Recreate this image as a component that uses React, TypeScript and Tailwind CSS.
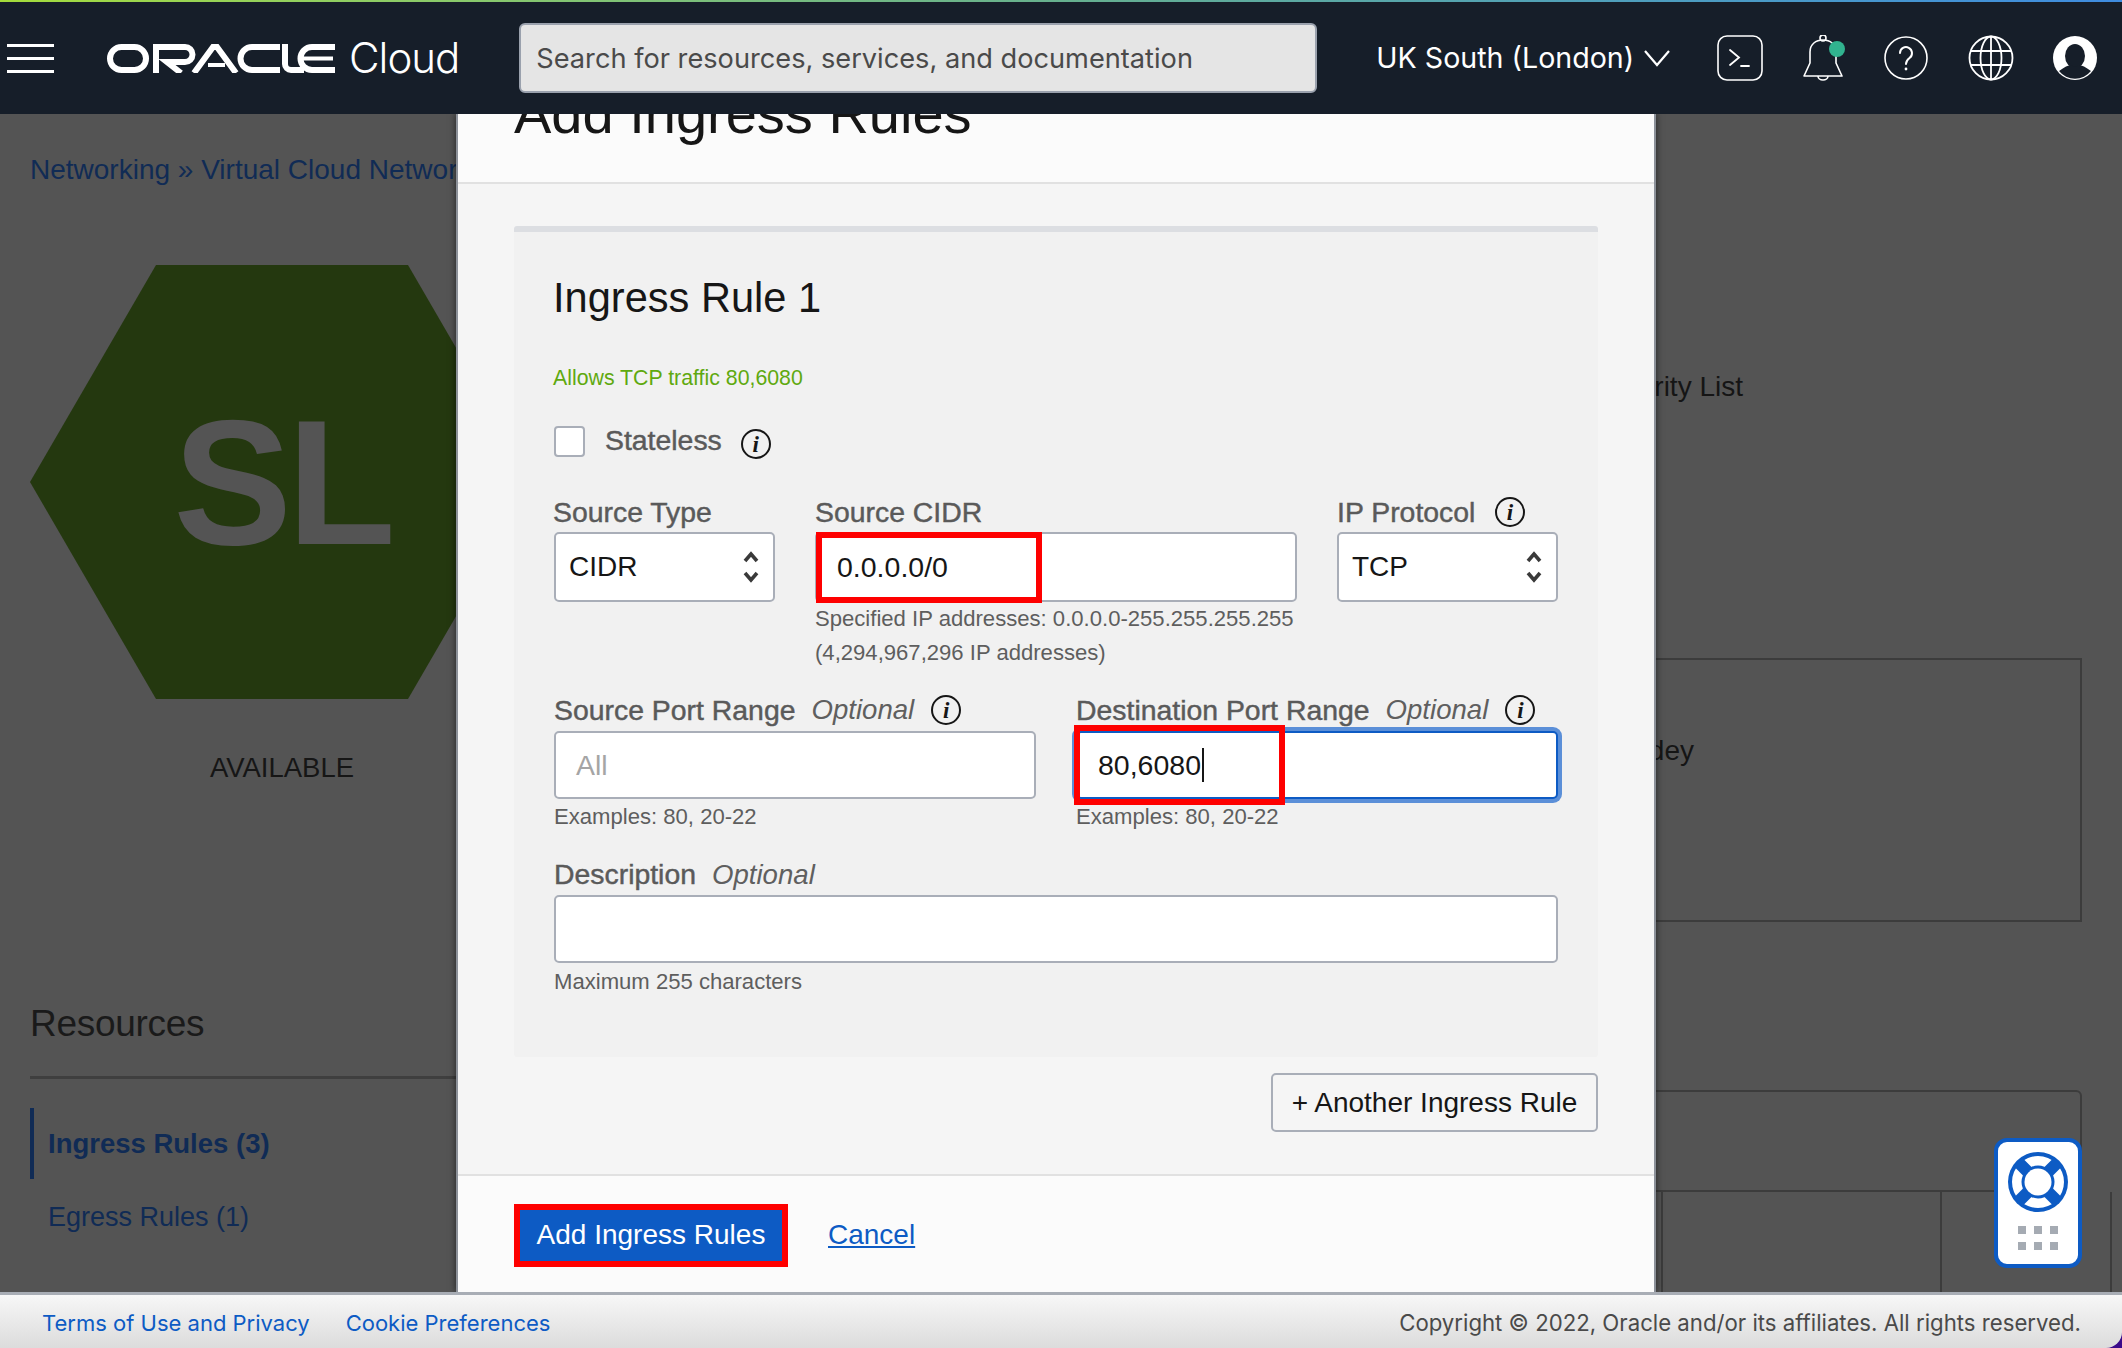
import type { ReactNode } from "react";

const sans = "font-['Liberation_Sans',Arial,sans-serif]";
const ui = "font-['Inter','Noto_Sans',sans-serif]";
const labelCls = "text-[28.4px] leading-[30px] text-[#5a5a5a] [-webkit-text-stroke:0.45px_#5a5a5a] whitespace-nowrap";
const optionalCls = "ml-[16px] text-[27.6px] italic text-[#5f5f5f] [-webkit-text-stroke:0]";
const fieldCls = "flex items-center rounded-[5px] border-2 border-[#a9aeb8] bg-white text-[28.5px] text-[#161616]";
const helpCls = "whitespace-nowrap text-[22.1px] text-[#5e5e5e]";

function OracleLogo() {
  return (
    <svg width="228" height="29" viewBox="0 0 228 29" fill="none" stroke="white" strokeWidth="6" role="img" aria-label="ORACLE">
      <rect x="3" y="3" width="36" height="23" rx="11.5" />
      <path d="M49 29V3H78a7.5 7.5 0 0 1 0 15H60L74 29" />
      <path d="M87 29L106 3H110L129 29" />
      <path d="M101 21H118" strokeWidth="4" />
      <path d="M173 3H145a11.5 11.5 0 0 0 0 23H173" />
      <path d="M178 0V20a6 6 0 0 0 6 6H197" />
      <path d="M228 3H205a11.5 11.5 0 0 0 0 23H228" />
      <path d="M196 14.5H226" strokeWidth="4" />
    </svg>
  );
}

function HeaderIcons() {
  return (
    <div className="ml-[46px] flex items-center gap-[39.5px]">
      <svg width="46" height="46" viewBox="0 0 46 46" fill="none" stroke="white" strokeWidth="1.6" strokeLinecap="round">
        <rect x="1" y="1" width="44" height="44" rx="9" />
        <path d="M13 15L22 22.5L13 30M24 31H32" strokeWidth="1.8" />
      </svg>
      <svg width="42" height="46" viewBox="0 0 42 46" fill="none" stroke="white" strokeWidth="1.6">
        <path d="M1 41L7 28V17C7 9 13 5 20 5S33 9 33 17V28L39 41Z" strokeLinejoin="round" />
        <circle cx="20" cy="3" r="3" />
        <path d="M15 41a5 4 0 0 0 10 0" />
        <circle cx="34" cy="14" r="8" fill="#31b38f" stroke="none" />
      </svg>
      <svg width="44" height="44" viewBox="0 0 44 44" fill="none" stroke="white" strokeWidth="1.6" strokeLinecap="round">
        <circle cx="22" cy="22" r="21" />
        <path d="M16 17a6 6 0 1 1 9.5 5C23 24 22 25 22 28" strokeWidth="2" />
        <circle cx="22" cy="33" r="1.4" fill="white" stroke="none" />
      </svg>
      <svg width="46" height="46" viewBox="0 0 46 46" fill="none" stroke="white" strokeWidth="1.8">
        <circle cx="23" cy="23" r="21.5" />
        <ellipse cx="23" cy="23" rx="10.5" ry="21.5" />
        <path d="M3 16H43M3 30H43M23 1.5V44.5" />
      </svg>
      <svg width="44" height="44" viewBox="0 0 44 44">
        <circle cx="22" cy="22" r="22" fill="white" />
        <ellipse cx="22" cy="20" rx="10" ry="12" fill="#161e29" />
        <path d="M6 35Q14 29 18 29Q22 33 26 29Q30 29 38 35A20.5 20.5 0 0 1 6 35Z" fill="#161e29" />
      </svg>
    </div>
  );
}

function Info({ className }: { className?: string }) {
  return (
    <span className={`flex h-[30px] w-[30px] shrink-0 items-center justify-center rounded-full border-2 border-[#161616] font-['Liberation_Serif',serif] text-[23px] font-bold italic leading-none text-[#161616] [-webkit-text-stroke:0] ${className ?? ""}`}>
      i
    </span>
  );
}

function Chevrons() {
  return (
    <svg width="18" height="34" viewBox="0 0 18 34" fill="none" stroke="#3a3a3a" strokeWidth="3.6">
      <path d="M3 11L9 4L15 11M3 23L9 30L15 23" />
    </svg>
  );
}

function Select({ value }: { value: string }) {
  return (
    <div className={`${fieldCls} h-[70px] justify-between !text-[28px] pl-[13px] pr-[13px]`}>
      {value}
      <Chevrons />
    </div>
  );
}

function Marked({ className, children }: { className: string; children?: ReactNode }) {
  return <div className={`pointer-events-none absolute border-[6px] border-[#fe0000] ${className}`}>{children}</div>;
}

function Page() {
  return (
    <main className={`relative flex min-h-0 flex-1 justify-between overflow-hidden bg-[#545454] ${sans}`}>
      <div className="flex w-[620px] flex-col pl-[30px] text-[28px]">
        <div className="mt-[38px] leading-[36px] text-[#102b55]">Networking » Virtual Cloud Networks</div>
        <div className="relative mt-[77px] flex h-[434px] w-[504px] items-center justify-center">
          <svg className="absolute inset-0" width="504" height="434" viewBox="0 0 504 434">
            <polygon points="126,0 378,0 504,217 378,434 126,434 0,217" fill="#24380f" />
          </svg>
          <span className="relative text-[178px] font-bold tracking-[-5px] text-[#545454]">SL</span>
        </div>
        <div className="mt-[52px] w-[504px] text-center text-[27.5px] leading-[34px] text-[#161616]">AVAILABLE</div>
        <div className="mt-[217px] text-[37px] leading-[44px] tracking-[-0.3px] text-[#1a1a1a]">Resources</div>
        <div className="mt-[30px] h-[3px] bg-[#3f3f3f]" />
        <div className="mt-[29px] flex h-[71px] items-center border-l-4 border-[#102b55] pl-[14px] text-[27.5px] font-bold text-[#102b55]">Ingress Rules (3)</div>
        <div className="mt-[20px] pl-[18px] text-[27px] leading-[36px] text-[#102b55]">Egress Rules (1)</div>
      </div>

      <div className="flex w-[700px] flex-col items-end pr-[10px] text-[28px] text-[#151515]">
        <div className="mr-[369px] mt-[255px] w-[333px] text-right leading-[36px]">Security List</div>
        <div className="mr-[30px] mt-[253px] flex h-[265px] w-[690px] items-center justify-start border-2 border-[#3c3c3c] pl-[10px]">
          <span className="-mt-[78px] ml-[2px]">Naveen Reddy Pandey</span>
        </div>
        <div className="mr-[30px] mt-[168px] h-[103px] w-[690px] rounded-tr-[6px] border-2 border-[#3c3c3c]" />
        <div className="flex h-[100px] w-[451px]">
          <div className="w-[279px] border-l-2 border-[#3c3c3c]" />
          <div className="w-[170px] border-l-2 border-[#3c3c3c]" />
          <div className="w-[2px] bg-[#3c3c3c]" />
        </div>
      </div>

      <section className="absolute inset-y-0 left-[456px] flex w-[1200px] flex-col border-x-2 border-[#8c9199] bg-[#f5f5f5] shadow-[0_0_7px_rgba(0,0,0,0.6)]">
        <div className="h-[70px] shrink-0 overflow-hidden border-b-2 border-[#e1e1e1] bg-[#fbfbfb] pl-[56px]">
          <h1 className="-mt-[28px] text-[56px] leading-[55px] text-[#161616]">Add Ingress Rules</h1>
        </div>

        <div className="min-h-0 flex-1 px-[56px] pt-[42px]">
          <div className="rounded-[3px] border-t-[6px] border-[#dcdee2] bg-[#f1f1f1] pb-[56px] pl-[40px] pr-[40px] pt-[42px]">
            <h2 className="-ml-[1px] text-[41.6px] leading-[48px] text-[#161616]">Ingress Rule 1</h2>
            <p className="-ml-[1px] mt-[42px] text-[21.3px] leading-[28px] text-[#5fa90f]">Allows TCP traffic 80,6080</p>
            <div className="mt-[34px] flex h-[31px] items-center">
              <span className="h-[31px] w-[31px] rounded-[4px] border-2 border-[#a9aeb8] bg-white" />
              <span className={`-mt-[4px] ml-[20px] ${labelCls}`}>Stateless</span>
              <Info className="ml-[19px] mt-[5px]" />
            </div>

            <div className="mt-[40px] grid grid-cols-[221px_1fr_221px] gap-x-[40px]">
              <div>
                <div className={`-ml-[1px] pb-[5px] ${labelCls}`}>Source Type</div>
                <Select value="CIDR" />
              </div>
              <div>
                <div className={`pb-[5px] ${labelCls}`}>Source CIDR</div>
                <div className="relative">
                  <div className={`${fieldCls} h-[70px] pl-[20px]`}>0.0.0.0/0</div>
                  <Marked className="left-[1px] top-0 h-[71px] w-[226px]" />
                </div>
                <div className={`${helpCls} leading-[34px]`}>
                  Specified IP addresses: 0.0.0.0-255.255.255.255
                  <br />
                  (4,294,967,296 IP addresses)
                </div>
              </div>
              <div>
                <div className={`flex h-[35px] items-start justify-between pr-[33px] ${labelCls}`}>
                  IP Protocol
                  <Info />
                </div>
                <Select value="TCP" />
              </div>
            </div>

            <div className="mt-[25px] grid grid-cols-2 gap-x-[40px]">
              <div>
                <div className={`flex h-[36px] items-start ${labelCls}`}>
                  Source Port Range
                  <span className={optionalCls}>Optional</span>
                  <Info className="ml-[17px]" />
                </div>
                <div className={`${fieldCls} h-[68px] pl-[20px] !text-[#a5a5a5]`}>All</div>
                <div className={`${helpCls} leading-[36px]`}>Examples: 80, 20-22</div>
              </div>
              <div>
                <div className={`flex h-[36px] items-start ${labelCls}`}>
                  Destination Port Range
                  <span className={optionalCls}>Optional</span>
                  <Info className="ml-[17px]" />
                </div>
                <div className="relative">
                  <div className={`${fieldCls} h-[68px] !border-[#0d5bc4] pl-[20px] shadow-[0_0_0_4px_#5b8fd8]`}>
                    80,6080
                    <span className="ml-[1px] h-[34px] w-[2px] bg-[#161616]" />
                  </div>
                  <Marked className="-left-[2px] -top-[6px] h-[80px] w-[211px]" />
                </div>
                <div className={`${helpCls} leading-[36px]`}>Examples: 80, 20-22</div>
              </div>
            </div>

            <div className="mt-[24px]">
              <div className={`h-[36px] ${labelCls}`}>
                Description
                <span className={optionalCls}>Optional</span>
              </div>
              <div className={`${fieldCls} h-[68px]`} />
              <div className={`${helpCls} leading-[38px]`}>Maximum 255 characters</div>
            </div>
          </div>

          <div className="mt-[16px] flex justify-end">
            <button className="h-[59px] w-[327px] rounded-[5px] border-2 border-[#a9aeb8] text-[28px] text-[#161616]">+ Another Ingress Rule</button>
          </div>
        </div>

        <div className="flex h-[118px] shrink-0 items-center border-t-2 border-[#e1e1e1] bg-[#fbfbfb] pl-[56px] pt-[2px]">
          <button className="flex h-[63px] w-[274px] items-center justify-center border-[6px] border-[#fe0000] bg-[#0d5bc4] text-[28px] text-white">Add Ingress Rules</button>
          <a className="ml-[40px] text-[28px] text-[#0d5bc4] underline">Cancel</a>
        </div>
      </section>

      <div className="absolute left-[1994px] top-[1024px] flex h-[130px] w-[88px] flex-col items-center rounded-[13px] border-4 border-[#0d5bc4] bg-white pt-[10px]">
        <svg width="60" height="60" viewBox="0 0 60 60" fill="none">
          <circle cx="30" cy="30" r="30" fill="#0d5bc4" />
          <circle cx="30" cy="30" r="26" fill="white" />
          <path d="M10 10L50 50M50 10L10 50" stroke="#0d5bc4" strokeWidth="12" />
          <circle cx="30" cy="30" r="16.5" fill="#0d5bc4" />
          <circle cx="30" cy="30" r="13.5" fill="white" />
        </svg>
        <div className="mt-[14px] grid grid-cols-[8px_8px_8px] gap-x-[8px] gap-y-[8px]">
          {[0, 1, 2, 3, 4, 5].map((n) => (
            <span key={n} className="h-[8px] w-[8px] bg-[#a5abb3]" />
          ))}
        </div>
      </div>
    </main>
  );
}

export default function App() {
  return (
    <div className={`flex h-[1348px] w-[2122px] flex-col overflow-hidden bg-[#3a0a8a] ${ui}`}>
      <div className="h-[2px] shrink-0 bg-gradient-to-r from-[#a4dc3a] via-[#66b08e] to-[#3f8ce0]" />
      <header className="flex h-[112px] shrink-0 items-center bg-[#161e29]">
        <div className="ml-[7px] flex w-[47px] flex-col gap-[10px]">
          <span className="h-[3px] bg-white" />
          <span className="h-[3px] bg-white" />
          <span className="h-[3px] bg-white" />
        </div>
        <div className="ml-[53px]">
          <OracleLogo />
        </div>
        <span className="ml-[14px] text-[42px] font-light leading-none tracking-[-1px] text-white">Cloud</span>
        <div className="ml-[60px] flex h-[70px] w-[798px] items-center rounded-[6px] border-2 border-[#9aa1ad] bg-[#e5e5e5] pl-[15px] pt-[2px] text-[27.2px] text-[#4a4a4a]">
          Search for resources, services, and documentation
        </div>
        <span className="ml-[59px] text-[28.6px] text-white">UK South (London)</span>
        <svg className="ml-[9px]" width="28" height="18" viewBox="0 0 28 18" fill="none" stroke="white" strokeWidth="2.2">
          <path d="M2 2L14 16L26 2" />
        </svg>
        <HeaderIcons />
      </header>
      <Page />
      <footer className="flex h-[56px] shrink-0 items-center justify-between rounded-br-[16px] border-t-[3px] border-[#a8adb5] bg-gradient-to-b from-[#f7f7f7] to-[#dcdcdc] pl-[42px] pr-[41px] pt-[3px] text-[22px]">
        <div className="flex gap-[36px] text-[#0d5bc4]">
          <a>Terms of Use and Privacy</a>
          <a>Cookie Preferences</a>
        </div>
        <span className="text-[22.2px] text-[#4a4a4a]">Copyright © 2022, Oracle and/or its affiliates. All rights reserved.</span>
      </footer>
    </div>
  );
}
